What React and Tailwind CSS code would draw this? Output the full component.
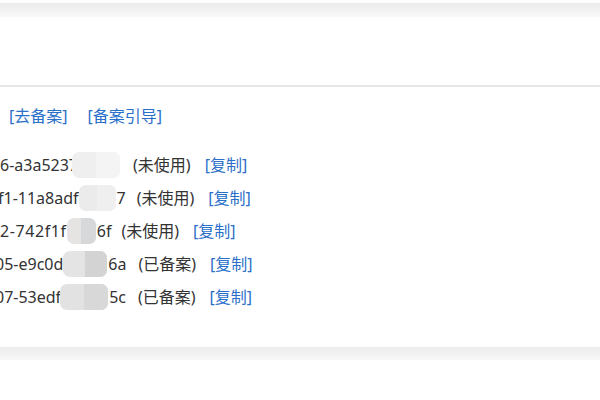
const rows = [
    { pre: "6-a3a5237", shift: "ml-0", track: "", blur: "w-[48px] -ml-[6px] bg-[#efefef]", blur2: "bg-[#f4f4f4]", post: "", status: "(未使用)", gap: "ml-[13px]" },
    { pre: "f1-11a8adf", shift: "-ml-[2px]", track: "", blur: "w-[37px] bg-[#ebebeb]", blur2: "bg-[#efefef]", post: "7", status: "(未使用)", gap: "ml-[11px]" },
    { pre: "2-742f1f", shift: "ml-0", track: "tracking-[0.6px]", blur: "w-[29px] bg-[#e6e3e3]", blur2: "bg-[#d6d8da]", post: "6f", status: "(未使用)", gap: "ml-[10px]" },
    { pre: "05-e9c0d", shift: "-ml-[5px]", track: "", blur: "w-[44px] bg-[#e4e4e4]", blur2: "bg-[#d3d3d3]", post: "6a", status: "(已备案)", gap: "ml-[12px]" },
    { pre: "07-53edf", shift: "-ml-[5px]", track: "", blur: "w-[48px] -ml-[1px] bg-[#e2e2e2]", blur2: "bg-[#d8d8d8]", post: "5c", status: "(已备案)", gap: "ml-[12px]" },
];

function BlurBlock({ cls, cls2 }) {
    // stand-in for the pixelated / blurred part of the key
    return (
        <span className={`relative inline-flex h-[26px] overflow-hidden rounded-[7px] ${cls}`}>
            <span className={`ml-auto h-full w-1/2 ${cls2}`}></span>
        </span>
    );
}

export default function App() {
    return (
        <div
            className="w-[600px] h-[400px] overflow-hidden bg-white text-[#333] text-[16px]"
            style={{ fontFamily: '"Noto Sans", "Noto Sans CJK SC", sans-serif' }}
        >
            <div className="h-[3px] bg-white"></div>
            <div className="h-[14px] bg-gradient-to-b from-[#ececec] to-[#f8f8f8]"></div>
            <div className="h-[70px] bg-white border-b-2 border-[#e6e6e6]"></div>

            <div className="pt-[18px] pl-[9px] flex items-center gap-[20px] h-[40px] text-[#2a6fc9]">
                <span>[去备案]</span>
                <span>[备案引导]</span>
            </div>

            <div className="mt-[21px] flex flex-col">
                {rows.map((r, i) => (
                    <div key={i} className={`h-[33px] flex items-center whitespace-nowrap ${r.shift}`}>
                        <span className={r.track}>{r.pre}</span>
                        <BlurBlock cls={r.blur} cls2={r.blur2} />
                        {r.post && <span className="ml-[1px]">{r.post}</span>}
                        <span className={r.gap}>{r.status}</span>
                        <span className="ml-[14px] text-[#2a6fc9]">[复制]</span>
                    </div>
                ))}
            </div>

            <div className="mt-[34px] h-[13px] bg-gradient-to-b from-[#ececec] to-[#f8f8f8]"></div>
        </div>
    );
}
